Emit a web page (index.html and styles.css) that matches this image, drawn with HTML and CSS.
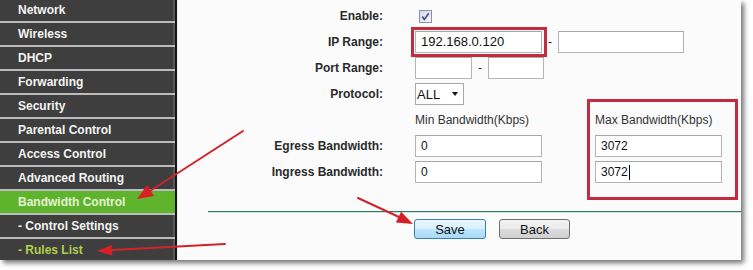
FILE: index.html
```html
<!DOCTYPE html>
<html>
<head>
<meta charset="utf-8">
<link rel="stylesheet" href="styles.css">
</head>
<body>
<div class="window">
  <nav class="sidebar">
    <div class="item">Network</div>
    <div class="item">Wireless</div>
    <div class="item">DHCP</div>
    <div class="item">Forwarding</div>
    <div class="item">Security</div>
    <div class="item">Parental Control</div>
    <div class="item">Access Control</div>
    <div class="item">Advanced Routing</div>
    <div class="item active">Bandwidth Control</div>
    <div class="item">- Control Settings</div>
    <div class="item current">- Rules List</div>
  </nav>
  <main class="content">
    <div class="form">
      <div class="row">
        <div class="label">Enable:</div>
        <div class="ctl">
          <svg class="check" width="13" height="13" viewBox="0 0 13 13">
            <defs><linearGradient id="cb" x1="0" y1="0" x2="1" y2="1"><stop offset="0" stop-color="#d6d7e6"/><stop offset="1" stop-color="#f7f7fb"/></linearGradient></defs>
            <rect x="0.5" y="0.5" width="12" height="12" fill="url(#cb)" stroke="#8d8fae"/>
            <path d="M3.2 6.6 L5.4 9.4 L9.8 3.2" fill="none" stroke="#44548c" stroke-width="1.7"/>
          </svg>
        </div>
      </div>
      <div class="row">
        <div class="label">IP Range:</div>
        <div class="ctl">
          <div class="field w127 big">192.168.0.120</div>
          <span class="dash">-</span>
          <div class="field w126"></div>
        </div>
      </div>
      <div class="row">
        <div class="label">Port Range:</div>
        <div class="ctl">
          <div class="field w57"></div>
          <span class="dash">-</span>
          <div class="field w56"></div>
        </div>
      </div>
      <div class="row">
        <div class="label">Protocol:</div>
        <div class="ctl">
          <div class="select"><span>ALL</span><span class="tri"></span></div>
        </div>
      </div>
      <div class="row">
        <div class="label"></div>
        <div class="ctl">
          <span class="head first">Min Bandwidth(Kbps)</span>
          <span class="head">Max Bandwidth(Kbps)</span>
        </div>
      </div>
      <div class="row">
        <div class="label">Egress Bandwidth:</div>
        <div class="ctl">
          <div class="field w127">0</div>
          <div class="field w127 gapl">3072</div>
        </div>
      </div>
      <div class="row">
        <div class="label">Ingress Bandwidth:</div>
        <div class="ctl">
          <div class="field w127">0</div>
          <div class="field w127 gapl">3072<span class="caret"></span></div>
        </div>
      </div>
    </div>
    <div class="rule"></div>
    <div class="buttons">
      <button class="btn save">Save</button>
      <button class="btn back">Back</button>
    </div>
  </main>
  <svg class="annotations" width="741" height="260" viewBox="0 0 741 260">
    <g fill="none" stroke="#c42b3f" stroke-width="3">
      <rect x="412.5" y="28.5" width="133" height="27"/>
      <rect x="588.5" y="100.5" width="148" height="98"/>
    </g>
    <g stroke="#d2232b" stroke-width="2" stroke-linecap="round">
      <line x1="243" y1="131" x2="150" y2="191"/>
      <line x1="225" y1="244" x2="112" y2="250"/>
      <line x1="358" y1="198" x2="399" y2="217"/>
    </g>
    <g fill="#d91f26">
      <polygon points="137,199 154,196 147,185"/>
      <polygon points="97,251 112.3,255.5 111.7,245"/>
      <polygon points="413,224 395.9,222.6 401.1,211.8"/>
    </g>
  </svg>
</div>
</body>
</html>
```

FILE: styles.css
```css
html, body {
  margin: 0;
  padding: 0;
  background: #ffffff;
}

body {
  font-family: "Liberation Sans", Arial, sans-serif;
  width: 753px;
  height: 270px;
  overflow: hidden;
}

.window {
  position: relative;
  width: 741px;
  height: 260px;
  display: flex;
  background: #fbfbfb;
  box-shadow: 3px 3px 5px rgba(0, 0, 0, 0.55);
}

.sidebar {
  width: 175px;
  flex: none;
  height: 260px;
  overflow: hidden;
  background: #3e3e3e;
  border-right: 2px solid #161616;
  box-shadow: inset -2px 0 0 #575757;
}

.item {
  height: 22px;
  line-height: 22px;
  border-bottom: 2px solid #bcbcbc;
  padding-left: 18px;
  color: #f4f4f4;
  font-size: 12px;
  font-weight: bold;
  white-space: nowrap;
}

.item:first-child {
  margin-top: -1px;
}

.item.active {
  background: #5fb42e;
  color: #e6f3d2;
}

.item.current {
  color: #b3cf4c;
}

.content {
  flex: 1;
  min-width: 0;
  overflow: hidden;
  display: flex;
  flex-direction: column;
  border-left: 1px solid #efefef;
}

.form {
  padding-top: 3px;
}

.row {
  display: grid;
  grid-template-columns: 205px 1fr;
  column-gap: 32px;
  align-items: center;
  height: 26px;
}

.label {
  text-align: right;
  font-size: 12px;
  font-weight: bold;
  color: #2a2a2a;
  white-space: nowrap;
}

.ctl {
  display: flex;
  align-items: center;
  font-size: 12px;
  color: #333;
  min-width: 0;
}

.check {
  display: block;
  margin-left: 4px;
}

.field {
  box-sizing: border-box;
  height: 22px;
  border: 1px solid #b4b4b4;
  border-top-color: #a6a6a6;
  background: #ffffff;
  font-size: 12px;
  line-height: 20px;
  padding-left: 5px;
  color: #111;
  display: flex;
  align-items: center;
}

.field.big {
  font-size: 13px;
}

.w127 { width: 127px; }
.w126 { width: 126px; }
.w57 { width: 57px; }
.w56 { width: 56px; }

.gapl {
  margin-left: 53px;
}

.dash {
  width: 16px;
  text-align: center;
  font-size: 12px;
  color: #222;
}

.select {
  box-sizing: border-box;
  width: 49px;
  height: 22px;
  border: 1px solid #a9a9a9;
  background: #fff;
  display: flex;
  align-items: center;
  padding-left: 1px;
  font-size: 13px;
  color: #111;
}

.tri {
  margin-left: auto;
  margin-right: 5px;
  width: 0;
  height: 0;
  border-left: 3.5px solid transparent;
  border-right: 3.5px solid transparent;
  border-top: 4px solid #111;
}

.head {
  white-space: nowrap;
  color: #333;
}

.head.first {
  width: 180px;
  flex: none;
}

.caret {
  display: inline-block;
  width: 1px;
  height: 15px;
  background: #000;
  margin-left: 1px;
}

.rule {
  margin-top: 26px;
  margin-left: 30px;
  height: 1px;
  background: #2c7a6a;
  border-bottom: 1px solid #cfe2dc;
}

.buttons {
  display: flex;
  gap: 13px;
  padding-left: 236px;
  margin-top: 6px;
}

.btn {
  box-sizing: border-box;
  height: 20px;
  padding: 0;
  font-family: "Liberation Sans", Arial, sans-serif;
  font-size: 13px;
  color: #111;
  border-radius: 3px;
  border: 1px solid #707070;
  background: linear-gradient(#f2f2f2 0%, #ebebeb 50%, #dddddd 51%, #cfcfcf 100%);
}

.save {
  width: 72px;
  border-color: #3c7fb1;
  background: linear-gradient(#eaf6fd 0%, #d9f0fc 50%, #bee6fd 51%, #a7d9f5 100%);
}

.back {
  width: 71px;
}

.annotations {
  position: absolute;
  left: 0;
  top: 0;
  overflow: visible;
  pointer-events: none;
}
```
